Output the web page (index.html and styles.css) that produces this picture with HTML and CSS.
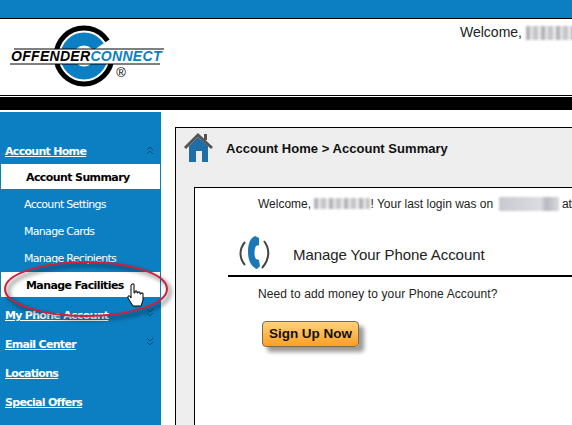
FILE: index.html
```html
<!DOCTYPE html>
<html lang="en">

<head>
    <meta charset="utf-8" />
    <title>Offender Connect</title>
    <link rel="stylesheet" href="styles.css">
</head>

<body>

    <div class="topbar"></div>

    <div class="header">
        <svg class="logo" width="165" height="76" viewBox="0 0 165 76">
            <circle cx="75" cy="37" r="28" fill="#fff" stroke="#000" stroke-width="5" />
            <circle cx="75" cy="37" r="17" fill="none" stroke="#0b7fc1" stroke-width="13" />
            <path d="M80 34 L106 17 L106 34 Z" fill="#fff" />
            <path d="M0 30 H155 V45 H0 Z" fill="#fff" />
            <path d="M5 30 H155 M1 45 H151" stroke="#000" stroke-width="1" />
            <text class="logo-text" x="2" y="42">OFFENDER<tspan class="logo-blue">CONNECT</tspan></text>
            <text class="logo-reg" x="112" y="58">®</text>
        </svg>
        <div class="welcome-top">Welcome, <span class="blur blur-top"></span></div>
    </div>

    <div class="rule"></div>

    <div class="page">

        <div class="sidebar">
            <a class="head first">Account Home
                <svg class="chev" width="8" height="9" viewBox="0 0 8 9"><path d="M1 4 L4 1 L7 4 M1 8 L4 5 L7 8" /></svg>
            </a>
            <a class="sub active">Account Summary</a>
            <a class="sub">Account Settings</a>
            <a class="sub">Manage Cards</a>
            <a class="sub">Manage Recipients</a>
            <a class="sub active last">Manage Facilities</a>
            <a class="head">My Phone Account
                <svg class="chev" width="8" height="9" viewBox="0 0 8 9"><path d="M1 1 L4 4 L7 1 M1 5 L4 8 L7 5" /></svg>
            </a>
            <a class="head">Email Center
                <svg class="chev" width="8" height="9" viewBox="0 0 8 9"><path d="M1 1 L4 4 L7 1 M1 5 L4 8 L7 5" /></svg>
            </a>
            <a class="head">Locations</a>
            <a class="head">Special Offers</a>
        </div>

        <div class="panel">
            <div class="crumbs">
                <svg class="home" width="32" height="32" viewBox="0 0 32 32">
                    <path d="M6 15 L15 6 L25 15 V31 H19 V20 H13 V31 H6 Z" fill="#1f6ea8" />
                    <path d="M21 3 H24 V9 H21 Z" fill="#555" />
                    <path d="M2 17 L15 4 L29 17" fill="none" stroke="#555" stroke-width="3" />
                </svg>
                <span>Account Home &gt; Account Summary</span>
            </div>
            <div class="inner">
                <p class="login">Welcome, <span class="blur blur-name"></span>! Your last login was on <span class="blur blur-date"></span> at</p>
                <div class="phone-head">
                    <svg class="phone" width="36" height="34" viewBox="0 0 36 34">
                        <path d="M9 6 C3 13 3 22 9 29" fill="none" stroke="#444" stroke-width="2" />
                        <path d="M28 5 C34 13 34 23 26 32" fill="none" stroke="#444" stroke-width="2" />
                        <path d="M19 0 L23 2 L23 9 L20 10 C18 14 18 20 20 23 L23 24 L24 30 L21 33 C15 31 12 24 12 16 C12 8 14 2 19 0 Z" fill="#1b78b4" />
                    </svg>
                    <span>Manage Your Phone Account</span>
                </div>
                <p class="need">Need to add money to your Phone Account?</p>
                <a class="signup">Sign Up Now</a>
            </div>
        </div>

        <svg class="circle" width="180" height="70" viewBox="0 0 180 70">
            <defs>
                <filter id="soft" x="-10%" y="-20%" width="120%" height="140%">
                    <feGaussianBlur stdDeviation="2" />
                </filter>
            </defs>
            <ellipse cx="89" cy="36" rx="81" ry="27" fill="none" stroke="#000" stroke-opacity="0.45" stroke-width="3" filter="url(#soft)" />
            <ellipse cx="86" cy="33" rx="81" ry="27" fill="none" stroke="#cf1f3a" stroke-width="2" />
        </svg>

        <svg class="hand" width="17" height="24" viewBox="0 0 17 24">
            <path d="M5 1 H7 V10 H8 V8 H10 V10 H11 V9 H13 V11 H14 V10 H16 V17 L14 23 H6 L1 15 V13 H3 L4 15 V2 Z" fill="#fff" stroke="#000" stroke-width="1" stroke-linejoin="round" />
        </svg>

    </div>

</body>

</html>
```

FILE: styles.css
```css
html, body {
    height: 100%;
}

body {
    margin: 0;
    background-color: white;
    font-family: "Liberation Sans", Arial, sans-serif;
    overflow: hidden;
}

.topbar {
    height: 18px;
    background-color: #0b7fc1;
    border-bottom: 1px solid black;
}

.header {
    height: 76px;
    display: flex;
    justify-content: space-between;
}

.logo {
    margin-left: 9px;
}

.logo-text {
    font-family: "Liberation Sans", Arial, sans-serif;
    font-size: 14px;
    font-weight: bold;
    font-style: italic;
    letter-spacing: 0.3px;
}

.logo-blue {
    fill: #0b7fc1;
}

.logo-reg {
    font-family: "Liberation Sans", Arial, sans-serif;
    font-size: 13px;
    text-anchor: middle;
}

.welcome-top {
    width: 112px;
    padding-top: 5px;
    font-size: 14px;
    color: #222;
    white-space: nowrap;
}

.rule {
    height: 13px;
    background-color: black;
    border-top: 1px solid black;
    box-shadow: inset 0 1px 0 white;
    padding-top: 1px;
    margin-bottom: 2px;
}

.page {
    position: relative;
    display: flex;
    height: 313px;
    overflow: hidden;
}

.sidebar {
    width: 161px;
    flex-shrink: 0;
    padding-top: 25px;
    background-color: #0b7fc1;
    font-family: "DejaVu Sans", Verdana, sans-serif;
    font-size: 11px;
    color: white;
}

.sidebar a {
    display: flex;
    align-items: center;
    white-space: nowrap;
    box-sizing: border-box;
}

.head {
    height: 29px;
    position: relative;
    padding: 4px 0 0 5px;
    font-weight: bold;
    text-decoration: underline;
    letter-spacing: -0.7px;
}

.head.first {
    height: 27px;
    padding-top: 2px;
}

.chev {
    position: absolute;
    left: 146px;
    top: 9px;
    fill: none;
    stroke: #0a4a78;
    stroke-width: 1;
}

.sub {
    height: 27px;
    padding-left: 24px;
    letter-spacing: -0.7px;
}

.sub.active {
    height: 25px;
    margin: 0 1px 2px 1px;
    padding: 2px 0 0 25px;
    background-color: white;
    color: black;
    font-weight: bold;
    letter-spacing: -0.6px;
}

.panel {
    margin: 15px 0 0 14px;
    flex-grow: 1;
    display: flex;
    flex-direction: column;
    border: 1px solid black;
    border-right: none;
    border-bottom: none;
    background-color: #eee;
}

.crumbs {
    height: 59px;
    flex-shrink: 0;
    padding-left: 50px;
    box-sizing: border-box;
    display: flex;
    align-items: flex-start;
    position: relative;
    font-size: 13px;
    font-weight: bold;
    letter-spacing: 0.03px;
    padding-top: 13px;
    color: #111;
}

.home {
    position: absolute;
    left: 7px;
    top: 3px;
}

.inner {
    margin-left: 18px;
    flex-grow: 1;
    border: 1px solid black;
    border-right: none;
    border-bottom: none;
    background-color: white;
    font-size: 12px;
    color: #222;
}

.login {
    margin: 0;
    padding: 9px 0 0 63px;
    white-space: nowrap;
}

.phone-head {
    margin: 23px 0 0 33px;
    height: 41px;
    display: flex;
    align-items: center;
    gap: 21px;
    border-bottom: 2px solid black;
    font-size: 15px;
    letter-spacing: -0.08px;
    white-space: nowrap;
}

.phone {
    margin: 0 0 3px 8px;
}

.need {
    margin: 10px 0 0 63px;
    letter-spacing: 0.1px;
}

.signup {
    display: inline-block;
    margin: 20px 0 0 67px;
    width: 97px;
    height: 26px;
    line-height: 24px;
    text-align: center;
    box-sizing: border-box;
    border: 1px solid #7a6a50;
    border-radius: 4px;
    background: linear-gradient(#ffd27a, #fd9f25);
    box-shadow: 5px 5px 4px #999;
    font-size: 13.5px;
    font-weight: bold;
    color: #111;
}

.blur {
    display: inline-block;
    height: 11px;
    vertical-align: -1px;
    background: repeating-linear-gradient(90deg, #b4b4b8 0 4px, #e4e4e6 4px 7px, #c6c6ca 7px 12px, #ececee 12px 15px);
    filter: blur(1px);
}

.blur-top {
    width: 50px;
    height: 14px;
    vertical-align: -3px;
}

.blur-name {
    width: 56px;
}

.blur-date {
    width: 60px;
    height: 14px;
    vertical-align: -3px;
    margin: 0 0 0 2px;
    background: linear-gradient(90deg, #c8c8d0, #dcdce2 70%, #b8b8c0 78%, #d8d8de);
}

.circle {
    position: absolute;
    left: 0;
    top: 144px;
    pointer-events: none;
}

.hand {
    position: absolute;
    left: 127px;
    top: 171px;
}
```
